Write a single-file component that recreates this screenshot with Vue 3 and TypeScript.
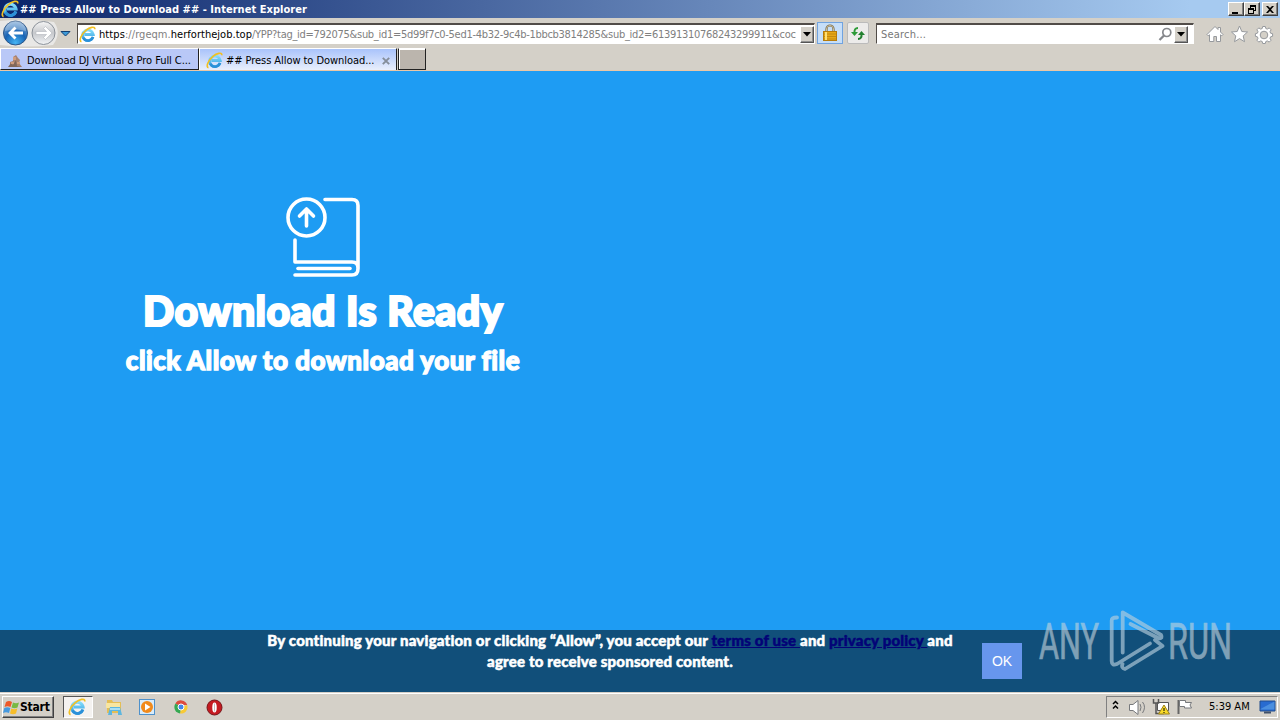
<script setup lang="ts">
interface CaptionButton { name: string; path: string }

const captionButtons: CaptionButton[] = [
  { name: 'minimize', path: 'M3 9h6v2H3z' },
  { name: 'restore', path: 'M5 2h6v6H9v-1h1V4H6v1H5zM3 5h6v6H3zm1 2v3h4V7z' },
  { name: 'close', path: 'M3 3h2l2 2 2-2h2L8 6.500 11 10H9L7 8l-2 2H3l3-3.500z' },
]
const url = '/YPP?tag_id=792075&sub_id1=5d99f7c0-5ed1-4b32-9c4b-1bbcb3814285&sub_id2=61391310768243299911&coc'
</script>

<template>
  <div class="screen">
    <svg class="defs" width="0" height="0">
      <defs>
        <linearGradient id="ieBlue" x1="0" y1="0" x2="0" y2="1">
          <stop offset="0" stop-color="#84dcfb" /><stop offset="1" stop-color="#2e9ce0" />
        </linearGradient>
        <radialGradient id="backFill" cx=".5" cy=".9" r=".9">
          <stop offset="0" stop-color="#45b4f4" /><stop offset=".5" stop-color="#1763b4" /><stop offset="1" stop-color="#8eb4dc" />
        </radialGradient>
        <linearGradient id="fwdFill" x1="0" y1="0" x2="0" y2="1">
          <stop offset="0" stop-color="#f6f6f6" /><stop offset=".5" stop-color="#c6c8cc" /><stop offset="1" stop-color="#f2f4f6" />
        </linearGradient>
        <symbol id="ie" viewBox="0 0 16 16">
          <path d="M13.200 10.300A5 5 0 1 1 13.400 8H5.200" fill="none" stroke="url(#ieBlue)" stroke-width="2.700" />
          <path d="M13.200 10.300A5 5 0 0 1 4 11" fill="none" stroke="#2b90d8" stroke-width="2.200" />
          <path d="M2.300 14.800C-.5 14 2 8 6.500 4.200 10 1.200 15 -.2 15 3" fill="none" stroke="#f2c022" stroke-width="1.500" />
        </symbol>
      </defs>
    </svg>

    <header class="titlebar">
      <svg class="title-icon" width="18" height="18"><use href="#ie" /></svg>
      <span class="title-text">## Press Allow to Download ## - Internet Explorer</span>
      <div class="captions">
        <button v-for="b in captionButtons" :key="b.name" :class="['caption', b.name]" :aria-label="b.name">
          <svg width="14" height="12" viewBox="0 0 14 12"><path :d="b.path" fill-rule="evenodd" /></svg>
        </button>
      </div>
    </header>

    <div class="toolbar">
      <svg class="nav" width="76" height="30" viewBox="0 0 76 30">
        <path d="M0 3Q28 0 54 4Q62 15 53 27Q26 30 0 27z" fill="#e9e8e6" />
        <circle cx="15.500" cy="15" r="12" fill="url(#backFill)" stroke="#2c5688" />
        <path d="M5 13a10.500 10.500 0 0 1 21 0q-10-3-21 0z" fill="#fff" opacity=".28" />
        <path d="M8 15l6.500-6.500 2 2-3 3H23v3h-9.500l3 3-2 2z" fill="#fff" />
        <circle cx="43.500" cy="15" r="11.500" fill="url(#fwdFill)" stroke="#8b9199" />
        <path d="M52 15l-6.500-6.500-2 2 3 3H36v3h10.500l-3 3 2 2z" fill="#fff" stroke="#b3b7bd" stroke-width=".6" />
        <path d="M61 13.500h9L65.500 18z" fill="#3c9ad8" stroke="#123f72" />
      </svg>
      <div class="address field">
        <svg class="addr-icon" width="17" height="17"><use href="#ie" /></svg>
        <span class="addr-text"><span class="dark scheme">https</span><span class="sub">://rgeqm.</span><span class="dark host">herforthejob.top</span><span class="path">{{ url }}</span></span>
        <span class="drop"><svg width="8" height="5"><path d="M0 0h8L4 4.500z" /></svg></span>
      </div>
      <span class="tool lock">
        <svg width="16" height="18" viewBox="0 0 16 18">
          <path d="M4.500 8V5a3.500 3.500 0 0 1 7 0v3" fill="none" stroke="#77694c" stroke-width="2.200" />
          <path d="M4.500 8V5a3.500 3.500 0 0 1 7 0v3" fill="none" stroke="#e2d5ac" stroke-width=".8" />
          <rect x="1.500" y="7.500" width="13" height="9" fill="#e8a817" stroke="#b67c0c" />
          <path d="M2 10h12M2 12.500h12M2 15h12" stroke="#c38a13" /><path d="M4 8v8" stroke="#ffdf73" stroke-width="2" />
        </svg>
      </span>
      <span class="tool refresh">
        <svg width="16" height="15" viewBox="0 0 16 15">
          <path d="M8 2Q4 2 4.500 7" fill="none" stroke="#2d9b38" stroke-width="2" /><path d="M1 6h7L4.500 10z" fill="#2d9b38" />
          <path d="M8 13q4 0 3.500-5" fill="none" stroke="#228030" stroke-width="2" /><path d="M8 9h7l-3.500-4z" fill="#228030" />
        </svg>
      </span>
      <div class="search field">
        <span class="search-text">Search...</span>
        <svg class="magnifier" width="15" height="15" viewBox="0 0 15 15"><circle cx="8.800" cy="5.500" r="4" fill="none" stroke="#85878b" stroke-width="1.700" /><path d="M6 8.500L1.500 13" stroke="#85878b" stroke-width="2.300" /></svg>
        <span class="drop"><svg width="8" height="5"><path d="M0 0h8L4 4.500z" /></svg></span>
      </div>
      <svg class="actions" width="68" height="20" viewBox="0 0 68 20" fill="#fff" stroke="#96999d">
        <path d="M1 10.500L9 2.500l3 3V3.500h2.500V8l2.500 2.500-1.200 1.300-1.300-1V17.500h-4v-5H7.800v5H3.500v-6.700l-1.300 1z" />
        <path d="M33.500 2l2.300 5.500 5.700.5-4.300 3.900 1.300 5.800-5-3.100-5 3.100 1.300-5.800L25.500 8l5.700-.5z" />
        <path fill-rule="evenodd" d="M56.700 2.500h2.600l.5 2 1.500.6 1.900-1.200 1.900 1.900L64 7.700l.6 1.500 2 .5v2.600l-2 .5-.6 1.500 1.100 1.900-1.900 1.900-1.900-1.200-1.500.6-.5 2h-2.600l-.5-2-1.500-.6-1.900 1.200-1.900-1.900L52 14.300l-.6-1.500-2-.5V9.700l2-.5.600-1.500-1.100-1.900 1.900-1.900 1.900 1.200 1.500-.6zM58 7.200a3.800 3.800 0 1 0 0 7.600 3.800 3.800 0 0 0 0-7.600z" />
      </svg>
    </div>

    <nav class="tabs">
      <div class="tab first">
        <svg width="16" height="16" viewBox="0 0 16 16"><path d="M3 14V9l3-1V4l3-2 2 3 2 2-1 3 3 4z" fill="#a98370" /><path d="M1 14l3-4 2 2 3-5 1 6 5 1z" fill="#80675b" /><path d="M6 4h3v3H6zM4 9h3v2H4zM10 9h3v2h-3z" fill="#cf9d7f" /></svg>
        <span class="tab-one">Download DJ Virtual 8 Pro Full C...</span>
      </div>
      <div class="tab active">
        <svg width="17" height="17"><use href="#ie" /></svg>
        <span class="tab-two">## Press Allow to Download...</span>
        <svg class="tab-close" width="8" height="8" viewBox="0 0 8 8"><path d="M.8.800l6.400 6.400M7.200.8L.8 7.200" stroke="#858e9a" stroke-width="1.900" /></svg>
      </div>
      <div class="new-tab"></div>
    </nav>

    <main class="page">
      <section class="message">
        <svg class="book" width="76" height="82" viewBox="0 0 76 82" fill="none" stroke="#fff" stroke-width="3.600" stroke-linecap="round" stroke-linejoin="round">
          <circle cx="21.500" cy="20.500" r="18.500" /><path d="M21.500 29V13M14.500 19l7-7 7 7" />
          <path d="M40 2.500h27q6 0 6 6v63q0 6.500-6 6.500H10M10 43v22h57q6 0 6 6" /><path d="M13 71.500h52" />
        </svg>
        <h1><span>Download Is Ready</span></h1>
        <h2><span>click Allow to download your file</span></h2>
      </section>
      <footer class="consent">
        <p><span class="line one">By continuing your navigation or clicking “Allow”, you accept our <a>terms of use </a>and <a>privacy policy </a>and</span><span class="line two">agree to receive sponsored content.</span></p>
        <button class="ok">OK</button>
      </footer>
      <svg class="watermark" width="204" height="64" viewBox="0 0 204 64">
        <g fill="#c3d3dc" stroke="#c3d3dc" stroke-width=".7" font-family="Roboto" font-size="50" font-weight="400" opacity=".62">
          <text x="1" y="50" textLength="60" lengthAdjust="spacingAndGlyphs">ANY</text>
          <text x="130" y="50" textLength="64" lengthAdjust="spacingAndGlyphs">RUN</text>
        </g>
        <g fill="none" stroke="#b6cedd" opacity=".65" stroke-width="3.800" stroke-linejoin="round" stroke-linecap="round">
          <path d="M79 8.500q-5.300 0-5.300 3V52q0 5 5.300 3L112 34.500" /><path d="M84.700 43.500V3.500L123 26q2 3.500-2 3.500L92.500 15" /><path d="M117 31l7.500 6L87 60q-4-1-2.500-5" />
        </g>
      </svg>
    </main>

    <footer class="taskbar">
      <button class="start">
        <svg width="17" height="17" viewBox="0 0 17 17"><path d="M3 3q3-2 6 0L7.500 8q-3-1.500-6 0z" fill="#ed5829" /><path d="M10 3.500q3 1.500 6 0L14.500 8.500q-3 1.500-6 0z" fill="#78b943" /><path d="M1.300 9q3-1.500 6 0L6 14q-3-1.500-6 0z" fill="#4699df" /><path d="M8.300 9.500q3 1.500 6 0L13 14.500q-3 1.500-6 0z" fill="#f7bd28" /></svg>
        <span>Start</span>
      </button>
      <div class="task-active"><svg width="18" height="18"><use href="#ie" /></svg></div>
      <svg class="launchers" width="124" height="20" viewBox="0 0 124 20">
        <path d="M3 3h5l1 2h8v11H3z" fill="#e5be55" /><path d="M2 6h14v5H2z" fill="#f8e6a0" /><path d="M4 18l2-8h10l2 8h-4v-4H8v4z" fill="#5cb6df" /><path d="M6 11h10v2H6z" fill="#a8dff4" />
        <rect x="35.500" y="2.500" width="15" height="15" fill="#d8ecfb" stroke="#4e91cb" /><circle cx="43" cy="10" r="6" fill="#f18a1b" /><path d="M41 6.500v7l5.500-3.500z" fill="#fff" />
        <path d="M77 10L71.400 6.500A6.500 6.500 0 0 1 83.200 8H77z" fill="#dd4b3e" /><path d="M77 10l6.200-2A6.500 6.500 0 0 1 76 16.500z" fill="#f8ca35" /><path d="M77 10l-1 6.500A6.500 6.500 0 0 1 71.400 6.500z" fill="#35a852" /><circle cx="77" cy="10" r="3" fill="#4286ec" stroke="#fff" />
        <circle cx="110.500" cy="10.500" r="7.500" fill="#c51a20" stroke="#76151a" /><ellipse cx="110.500" cy="10.500" rx="2.200" ry="5" fill="#fff" /><path d="M110.500 6.500v8" stroke="#c8bcbc" />
      </svg>
      <div class="tray">
        <svg width="86" height="18" viewBox="0 0 86 18">
          <path d="M1 6l2.500-2.500L6 6M1 10.500L3.500 8 6 10.500" fill="none" stroke="#000" stroke-width="1.500" />
          <g fill="#fff" stroke="#77797c"><path d="M17.500 6.500H21L26 2.500v14l-5-4h-3.500z" /><path d="M28 6q2 3 0 7M30.500 4q4 5 0 11" fill="none" /></g>
          <path d="M45.500 4.500h11v8h-11z" fill="#fff" stroke="#555" /><path d="M41.500 1v4h5V1M44 5v10.500h8" fill="none" stroke="#555" stroke-width="1.500" /><path d="M52 7l5.500 9h-11z" fill="#f9db28" stroke="#9c8116" /><path d="M52 10v3m0 1v1" stroke="#000" />
          <path d="M66.500 2v14" stroke="#666" stroke-width="2" /><path d="M67.500 2.500h6v2h6L78 7l1.500 3h-7V8.500h-5z" fill="#fff" stroke="#77797c" />
        </svg>
        <time>5:39 AM</time>
        <svg class="desktop" width="17" height="14" viewBox="0 0 17 14"><path d="M1 1h15v10H1z" fill="#286bd0" stroke="#204c8c" /><path d="M1.500 9L15.500 1.500v8h-14z" fill="#63a6e9" opacity=".6" /><path d="M5 12.500h7" stroke="#40516a" stroke-width="2" /></svg>
      </div>
    </footer>
  </div>
</template>

<style>
html, body { margin: 0; overflow: hidden; }
</style>

<style scoped>
.screen { width: 1280px; height: 720px; display: flex; flex-direction: column; background: #d4d0c8; color: #000; font: 11px/14px "DejaVu Sans Condensed", "DejaVu Sans", sans-serif; font-stretch: condensed; white-space: nowrap; overflow: hidden; }
.defs { position: absolute; }
button { box-sizing: border-box; padding: 0; margin: 0; border-radius: 0; }
svg { flex: none; }
.titlebar { height: 18px; flex: none; display: flex; align-items: center; background: linear-gradient(90deg, #0a246a, #a6caf0 93%); color: #fff; }
.title-icon { margin-left: 1px; }
.title-text { margin: 1px 0 0 1px; font-weight: 700; letter-spacing: .04px; }
.captions { margin-left: auto; margin-right: 2px; display: flex; }
.caption { width: 16px; height: 14px; background: #d4d0c8; border: 1px solid; border-color: #fff #404040 #404040 #fff; box-shadow: inset -1px -1px #808080; display: flex; }
.close { margin-left: 2px; }
.toolbar { height: 30px; flex: none; display: flex; align-items: flex-start; }
.nav { width: 76px; }
.field { box-sizing: border-box; height: 21px; margin-top: 5px; border: 1px solid #fff; border-top: 2px solid #514c48; border-left: 1px solid #514c48; background: #fff; display: flex; align-items: center; }
.address { width: 738px; margin-left: 1px; }
.addr-icon { margin-left: 1px; }
.addr-text { width: 699px; margin: 1px 0 0 3px; overflow: hidden; display: flex; color: #808080; }
.addr-text span { flex: none; }
.addr-text .dark { color: #000; }
.scheme { letter-spacing: .1px; }
.sub { letter-spacing: .05px; }
.host { letter-spacing: .03px; }
.path { letter-spacing: -.29px; }
.drop { width: 14px; height: 17px; flex: none; box-sizing: border-box; border: 1px solid; border-color: #fff #555 #555 #fff; box-shadow: inset -1px -1px #909090; background: #d4d0c8; display: flex; align-items: center; justify-content: center; }
.address .drop { margin-left: auto; }
.tool { box-sizing: border-box; display: flex; align-items: center; justify-content: center; margin-top: 4px; height: 22px; border: 1px solid #a7b8c8; }
.lock { width: 26px; margin-left: 2px; background: #c6def8; border-color: #70a3e0; }
.refresh { width: 22px; margin-left: 4px; background: #ecebea; border-color: #bbb; border-radius: 2px; }
.search { width: 318px; margin-left: 7px; }
.search-text { margin: 1px 0 0 4px; color: #777; letter-spacing: .2px; }
.magnifier { margin-left: auto; margin-right: 1px; }
.search .drop { margin-right: 5px; }
.actions { margin: 6px 0 0 12px; }
.tabs { height: 22px; flex: none; display: flex; border-bottom: 1px solid #eac7a6; }
.tab { box-sizing: border-box; height: 22px; display: flex; align-items: center; border-top: 1px solid #fff; border-right: 1px solid #222; }
.first { width: 199px; background: #b9c8f7; padding: 3px 0 0 6px; border-left: 1px solid #fff; border-bottom: 1px solid #222; }
.tab-one { margin-left: 4px; letter-spacing: -.06px; }
.active { width: 198px; padding: 2px 0 0 6px; border-left: 1px solid #fff; background: linear-gradient(#a9c3fb, #e9effc); }
.tab-two { margin-left: 3px; letter-spacing: -.06px; }
.tab-close { margin-left: auto; margin-right: 6px; }
.new-tab { box-sizing: border-box; width: 28px; height: 22px; margin-left: 1px; border: 1px solid #222; border-top-color: #fff; background: #bbb5ad; box-shadow: inset 1px 1px #fff; }
.page { position: relative; height: 621px; flex: none; display: flex; flex-direction: column; background: #1e9cf3; color: #fff; font-family: Lato, sans-serif; font-stretch: normal; }
.message { width: 646px; display: flex; flex-direction: column; align-items: center; padding-top: 126px; }
h1, h2 { margin: 0; font-weight: 900; -webkit-text-stroke: 2.2px #fff; stroke-linejoin: round; }
h1 { height: 50px; margin-top: 7px; font-size: 41px; line-height: 50px; letter-spacing: .45px; }
h2 { height: 34px; margin-top: 7px; font-size: 26px; line-height: 34px; letter-spacing: .5px; -webkit-text-stroke-width: 1.3px; }
.consent { height: 62px; margin-top: auto; display: flex; background: #114f7a; }
p { margin: 0 0 0 260px; width: 700px; font-size: 15px; line-height: 21px; font-weight: 900; letter-spacing: .19px; -webkit-text-stroke: .5px; display: flex; flex-direction: column; align-items: center; }
.line { white-space: pre; }
a { color: #030377; text-decoration: underline; }
.ok { width: 40px; height: 36px; margin: 13px 0 0 22px; border: 0; background: #6796ed; color: #fff; font: 14px "Liberation Sans", Arial, sans-serif; }
.watermark { position: absolute; left: 1038px; top: 538px; overflow: visible; }
.taskbar { box-sizing: border-box; height: 28px; flex: none; display: flex; align-items: flex-start; border-top: 1px solid #d4d0c8; box-shadow: inset 0 1px #fff; }
.start { width: 52px; height: 22px; margin: 3px 0 0 2px; display: flex; align-items: center; border: 1px solid; border-color: #fff #404040 #404040 #fff; box-shadow: inset -1px -1px #808080; background: #d4d0c8; color: #000; font: bold 12px "DejaVu Sans Condensed", "DejaVu Sans", sans-serif; font-stretch: condensed; }
.start span { letter-spacing: -.2px; }
.task-active { box-sizing: border-box; width: 30px; height: 22px; margin: 3px 0 0 9px; display: flex; align-items: center; padding-left: 4px; background: #f4f2f0; border: 1px solid; border-color: #555 #fff #fff #555; }
.launchers { margin: 4px 0 0 11px; }
.tray { box-sizing: border-box; width: 172px; height: 22px; margin: 3px 2px 0 auto; padding-left: 5px; display: flex; align-items: center; border: 1px solid; border-color: #808080 #fff #fff #808080; }
time { margin-left: 11px; letter-spacing: 0; }
.desktop { margin-left: auto; margin-right: 1px; }
</style>
